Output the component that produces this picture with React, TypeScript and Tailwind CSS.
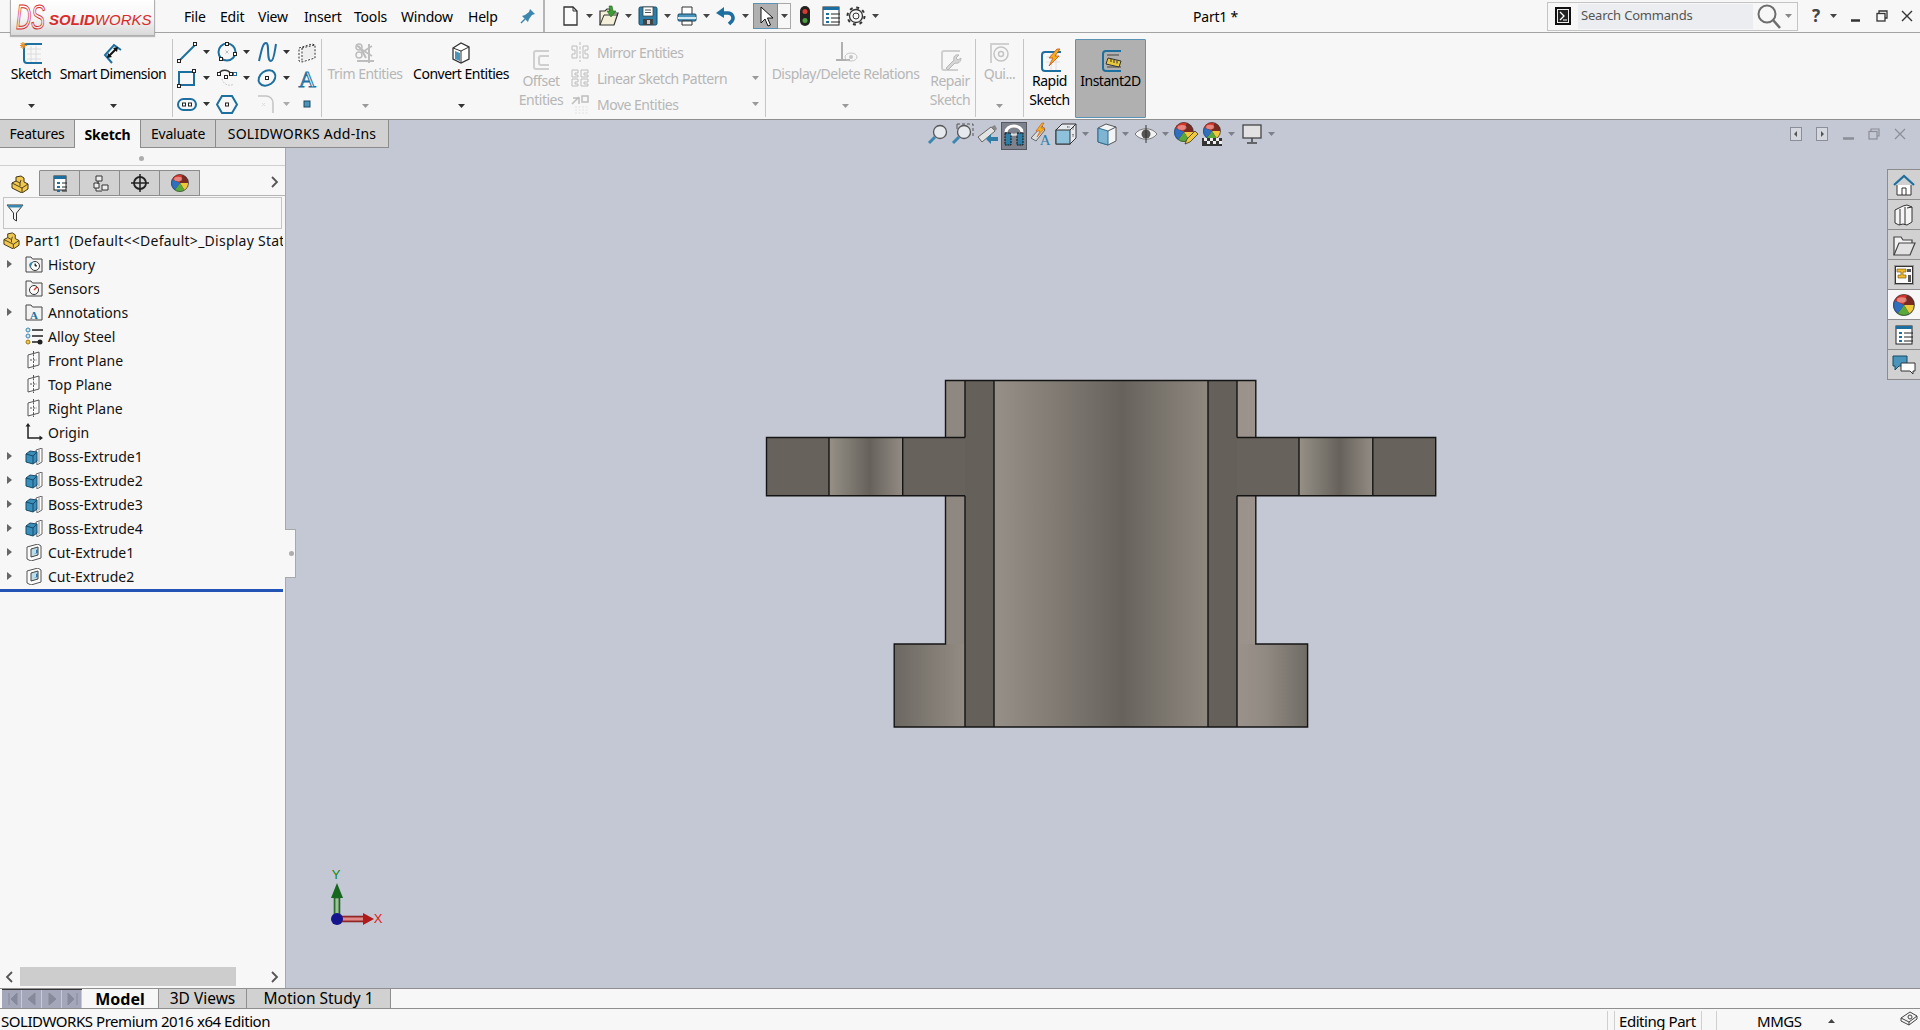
import React from "react";

const B = "#1d6f9f";
const G = "#bdbdbd";

type P = { w?: number; h?: number; children?: React.ReactNode };
const S = ({ w = 24, h = 24, children }: P) => (
  <svg width={w} height={h} viewBox={`0 0 ${w} ${h}`} className="shrink-0 block" fill="none">
    {children}
  </svg>
);
const Sq = ({ x, y, c = "#222" }: { x: number; y: number; c?: string }) => (
  <rect x={x - 1.5} y={y - 1.5} width="3" height="3" fill="#fff" stroke={c} strokeWidth="1" />
);
const Caret = ({ c = "#444" }: { c?: string }) => (
  <svg width="7" height="4" viewBox="0 0 7 4" className="shrink-0 block">
    <path d="M0 0h7L3.5 4z" fill={c} />
  </svg>
);

/* Ribbon icons */
const SketchI = () => (
  <S>
    <path d="M8 8h14M8 13h14M8 18h14M12 5v17M17 5v17" stroke="#dcdcdc" />
    <path d="M23 3H8a3 3 0 0 0-3 3v13a3 3 0 0 0 3 3h15" stroke={B} strokeWidth="2" />
    <path d="M4 1v7M1 4.500h7M1.800 2.200l4.400 4.400M6.200 2.200l-4.400 4.400" stroke="#e8902a" strokeWidth="1.200" />
  </S>
);
const SmartDimI = () => (
  <S>
    <path d="M20 9l-7-5-9 10 7 8" stroke={B} strokeWidth="2" />
    <path d="M8 15l7-7" stroke="#111" strokeWidth="2" />
    <path d="M6 17l1-5 4 4zM17 6l-1 5-4-4z" fill="#111" />
  </S>
);
const LineI = () => (
  <S w={22} h={24}>
    <path d="M4 20L19 5" stroke={B} strokeWidth="2" />
    <Sq x={3} y={21} />
    <Sq x={19} y={4} />
  </S>
);
const CircleI = () => (
  <S w={22} h={24}>
    <circle cx="11" cy="12" r="8.500" stroke={B} strokeWidth="2" />
    <path d="M9.500 10.500l3 3m0-3l-3 3" stroke="#bbb" />
    <Sq x={11} y={4} />
    <Sq x={19} y={14} />
    <Sq x={5} y={19} />
  </S>
);
const SplineI = () => (
  <S w={22} h={24}>
    <path d="M3 21C6 8 7 3 10 3c4 0 0 18 5 18 3 0 4-12 5-17" stroke={B} strokeWidth="2" />
  </S>
);
const ConstrI = () => (
  <S w={22} h={24}>
    <path d="M3 8l13-4 3 1v13l-13 4-3-1z" stroke="#333" strokeDasharray="2 1.500" />
    <path d="M6 8v14M6 8l13-3" stroke="#333" strokeDasharray="2 1.500" />
    <path d="M7 9l11-3v11L7 20z" fill="#eeeeee" />
  </S>
);
const RectI = () => (
  <S w={22} h={24}>
    <rect x="3" y="6" width="15" height="13" stroke={B} strokeWidth="2" />
    <Sq x={3} y={20} />
    <Sq x={18} y={5} />
  </S>
);
const PerimI = () => (
  <S w={22} h={24}>
    <path d="M6 13a8 8 0 0 0 12 5" stroke="#bbb" strokeDasharray="1.500 1.500" />
    <path d="M3 8c2-5 9-5 12 0" stroke="#333" strokeWidth="1.500" />
    <Sq x={3} y={8} />
    <Sq x={10} y={11} />
    <Sq x={15} y={8} />
    <Sq x={19} y={8} c={B} />
  </S>
);
const EllipseI = () => (
  <S w={22} h={24}>
    <ellipse cx="11" cy="12" rx="9" ry="7" transform="rotate(-35 11 12)" stroke={B} strokeWidth="2" />
    <Sq x={11} y={12} />
  </S>
);
const TextI = () => (
  <S w={22} h={24}>
    <text x="11" y="21" textAnchor="middle" fontFamily="Liberation Serif, serif" fontSize="24" fill="#dff0f8" stroke={B} strokeWidth="1">
      A
    </text>
  </S>
);
const SlotI = () => (
  <S w={22} h={24}>
    <rect x="2" y="7" width="18" height="11" rx="5.500" stroke={B} strokeWidth="2" />
    <Sq x={8} y={12.500} />
    <Sq x={14} y={12.500} />
  </S>
);
const PolyI = () => (
  <S w={22} h={24}>
    <path d="M6 4h10l5 8.500-5 8.500H6L1 12.500z" stroke={B} strokeWidth="2" />
    <Sq x={11} y={12.500} />
  </S>
);
const FilletI = () => (
  <S w={22} h={24}>
    <path d="M2 4h8a7 7 0 0 1 7 7v10" stroke="#c4c4c4" strokeWidth="1.500" />
    <path d="M6 11l3 3m0-3l-3 3" stroke="#ddd" />
  </S>
);
const PointI = () => (
  <S w={22} h={24}>
    <rect x="8" y="9" width="6" height="6" fill="#4a93bb" stroke="#1d4a66" />
  </S>
);
const TrimI = () => (
  <S>
    <path d="M4 20h17M16 3v19M4 5c3 0 5 4 9 12" stroke={G} strokeWidth="2" />
    <circle cx="6" cy="6" r="3" stroke={G} strokeWidth="1.500" />
    <circle cx="6" cy="14" r="3" stroke={G} strokeWidth="1.500" />
    <path d="M8 8l11 7M8 12l11-7" stroke={G} strokeWidth="1.500" />
  </S>
);
const ConvertI = () => (
  <S>
    <path d="M4 7l8-5 8 4v12l-8 4-8-4z" fill="#fff" stroke="#333" strokeWidth="1.300" />
    <path d="M4 7l8 3 8-4M12 10v12" stroke="#333" />
    <path d="M6 10l5 2v8l-5-2z" fill="#4a93bb" />
  </S>
);
const OffsetI = () => (
  <S>
    <path d="M20 3H7a2 2 0 0 0-2 2v14a2 2 0 0 0 2 2h13" stroke="#cfcfcf" strokeWidth="2" />
    <path d="M20 8h-8a2 2 0 0 0-2 2v5a2 2 0 0 0 2 2h8" stroke="#cfcfcf" strokeWidth="2" />
  </S>
);
const MirrorI = () => (
  <S w={20} h={20}>
    <path d="M10 0v20" stroke={G} strokeDasharray="3 1.500" />
    <path d="M7 4H2v4h3v4H2v4h5zM13 4h5v4h-3v4h3v4h-5z" stroke={G} />
  </S>
);
const LinearI = () => (
  <S w={20} h={20}>
    <path d="M2 2h6v3H5v2h3v2H2zM11 2h7v3h-4v2h4v2h-7zM2 11h6v3H5v2h3v2H2zM11 11h7v3h-4v2h4v2h-7z" stroke={G} />
  </S>
);
const MoveI = () => (
  <S w={20} h={20}>
    <path d="M2 10l7-7M3 4h6v6" stroke={G} strokeWidth="1.500" />
    <rect x="12" y="2" width="6" height="6" stroke={G} strokeWidth="1.500" />
    <path d="M5 13h13M5 16h13M5 19h13" stroke="#e2e2e2" strokeDasharray="2 1.500" />
  </S>
);
const RelI = () => (
  <S>
    <path d="M8 1v17M2 19h14" stroke="#b0b0b0" strokeWidth="2" />
    <ellipse cx="17" cy="16" rx="6" ry="4" stroke="#c4c4c4" />
    <circle cx="17" cy="16" r="2" fill="#c4c4c4" />
  </S>
);
const RepairI = () => (
  <S>
    <path d="M22 3H6a2 2 0 0 0-2 2v15a2 2 0 0 0 2 2h14" stroke="#cfcfcf" strokeWidth="2" />
    <path d="M8 20l8-8c-1-3 1-6 5-5l-3 3 2 2 3-2c0 4-3 6-6 5l-7 7z" fill="#d5d5d5" stroke="#b8b8b8" />
  </S>
);
const QuickI = () => (
  <S>
    <path d="M3 22V3h18" stroke="#d0d0d0" strokeWidth="2" />
    <circle cx="13" cy="13" r="7" stroke="#c4c4c4" strokeWidth="1.500" />
    <circle cx="13" cy="13" r="2.500" stroke="#c4c4c4" strokeWidth="1.500" />
  </S>
);
const RapidI = () => (
  <S>
    <path d="M8 9h14M8 14h14M13 6v17M18 6v17" stroke="#dedede" />
    <path d="M23 4H7a3 3 0 0 0-3 3v13a3 3 0 0 0 3 3h16" stroke={B} strokeWidth="2" />
    <path d="M19 1l-8 9h4l-4 8 10-10h-4l5-7z" fill="#f2b01e" stroke="#c8541a" strokeWidth="0.800" />
  </S>
);
const InstantI = () => (
  <S>
    <path d="M22 3H7a3 3 0 0 0-3 3v14a3 3 0 0 0 3 3h15" stroke={B} strokeWidth="2" />
    <path d="M8 7h12M8 19h14" stroke="#444" />
    <path d="M9 10l13 3-2 6L7 16z" fill="#e8c840" stroke="#333" />
    <path d="M12 11v3M15 12v3M18 12.500v3" stroke="#333" />
  </S>
);

/* Quick access */
const NewI = () => (
  <S>
    <path d="M6 3h9l4 4v14H6z" fill="#fbfbfb" stroke="#333" strokeWidth="1.300" />
    <path d="M15 3v4h4" stroke="#333" />
  </S>
);
const OpenI = () => (
  <S>
    <path d="M3 21V7h5l2-2h3v4h8l-4 12z" fill="#f4efd8" stroke="#333" strokeWidth="1.200" />
    <path d="M3 21l4-10h14" stroke="#333" />
    <path d="M12 2h3l1 5 3 0-5 6-4-6 3 0z" fill="#3f9c35" stroke="#1d6a1c" strokeWidth="0.600" />
  </S>
);
const SaveI = () => (
  <S>
    <rect x="3" y="3" width="18" height="18" rx="1.500" fill="#2f7ea8" stroke="#174a66" />
    <rect x="7" y="3" width="10" height="9" fill="#fff" stroke="#333" strokeWidth="0.700" />
    <path d="M9 6h6M9 8.500h6" stroke="#555" />
    <rect x="7" y="15" width="10" height="6" fill="#444" />
    <rect x="11" y="16" width="3" height="4" fill="#ccc" />
  </S>
);
const PrintI = () => (
  <S>
    <path d="M7 10V3h10v7" fill="#fff" stroke="#333" />
    <rect x="3" y="10" width="18" height="7" rx="1" fill="#4a93bb" stroke="#174a66" />
    <rect x="3" y="13" width="18" height="2" fill="#d8e8f0" />
    <path d="M7 17h10v4H7z" fill="#fff" stroke="#333" />
  </S>
);
const UndoI = () => (
  <S>
    <path d="M7 9h7a5 5 0 0 1 4 8l-3 3" stroke="#1d6f9f" strokeWidth="3.500" fill="none" />
    <path d="M10 3L2 9l8 5z" fill="#1d6f9f" />
  </S>
);
const CursorI = () => (
  <S w={16} h={22}>
    <path d="M3 2v16l4-4 3 7 2.500-1-3-7h5.500z" fill="#fff" stroke="#111" />
  </S>
);
const TrafficI = () => (
  <S>
    <rect x="7" y="2" width="10" height="20" rx="5" fill="#222" />
    <circle cx="12" cy="7.500" r="2.500" fill="#d83a2e" />
    <circle cx="12" cy="16.500" r="2.500" fill="#4aa03a" />
  </S>
);
const ListI = ({ s = 24 }: { s?: number }) => (
  <S w={s} h={s}>
    <rect x="4" y="3" width={s - 8} height={s - 6} fill="#fff" stroke="#222" />
    <rect x="4" y="3" width={s - 8} height="3" fill={B} />
    <path d={`M7 9h3v2H7zM7 13h3v2H7zM7 17h3v2H7z`} fill={B} />
    <path d={`M12 10h${s - 15}M12 14h${s - 15}M12 18h${s - 15}`} stroke="#222" />
  </S>
);
const GearI = () => (
  <S>
    <circle cx="12" cy="12" r="6.500" stroke="#333" strokeWidth="1.300" />
    <circle cx="12" cy="12" r="3" stroke="#333" />
    <circle cx="12" cy="12" r="8.500" stroke="#333" strokeWidth="2" strokeDasharray="3 3.670" />
  </S>
);
const PinI = () => (
  <S w={18} h={18}>
    <path d="M11 2l5 5-3 1-3 4-1 3-6-6 3-1 4-3z" fill="#3b87ae" />
    <path d="M6 12l-4 4" stroke="#3b87ae" strokeWidth="1.500" />
  </S>
);

/* Balls etc */
const Ball = ({ s = 20 }: { s?: number }) => (
  <svg width={s} height={s} viewBox="0 0 20 20" className="shrink-0 block">
    <circle cx="10" cy="10" r="9.500" fill="#333" />
    <path d="M10 10L1 6A9.500 9.500 0 0 1 13 1z" fill="#d8342a" />
    <path d="M10 10l3-9a9.500 9.500 0 0 1 6 9z" fill="#7a2a20" />
    <path d="M10 10h9a9.500 9.500 0 0 1-4 8z" fill="#f0c83a" />
    <path d="M10 10l5 8a9.500 9.500 0 0 1-11 0z" fill="#5aa83a" />
    <path d="M10 10l-6 8A9.500 9.500 0 0 1 1 6z" fill="#2f6fc0" />
    <ellipse cx="8" cy="5.500" rx="4.500" ry="2.500" fill="#fff" opacity="0.400" />
    <circle cx="10" cy="10" r="9.500" fill="none" stroke="#3a3a3a" strokeOpacity="0.600" />
  </svg>
);
const PartI = ({ s = 17 }: { s?: number }) => (
  <svg width={s} height={s} viewBox="0 0 18 18" className="shrink-0 block">
    <path d="M1 8l4-2 0-4 5-1 3 2v4l4 2v5l-6 4-10-5z" fill="#f0c850" stroke="#3d3218" strokeWidth="1" />
    <path d="M1 8l10 5v4M11 13l6-4M5 6l4 2v3M10 5l-1 3" stroke="#3d3218" strokeWidth="0.900" fill="none" />
  </svg>
);

/* Tree */
const Folder = ({ children }: { children?: React.ReactNode }) => (
  <svg width="18" height="18" viewBox="0 0 18 18" className="block">
    <path d="M1 17V2h5l1.500 2H17v13z" fill="#f3f3f3" stroke="#444" strokeWidth="1" />
    {children}
  </svg>
);
const HistoryI = () => (
  <Folder>
    <circle cx="10" cy="11" r="4.500" fill="#fff" stroke="#333" />
    <path d="M10 8.500V11h2" stroke="#333" />
    <path d="M4 10a4 4 0 0 1 4-3L5 13z" fill="#3b87ae" />
  </Folder>
);
const SensorI = () => (
  <Folder>
    <circle cx="9" cy="11" r="4.500" fill="#fff" stroke="#333" />
    <path d="M9 11l3-3" stroke="#d8342a" strokeWidth="1.500" />
  </Folder>
);
const AnnotI = () => (
  <Folder>
    <text x="9" y="15.500" textAnchor="middle" fontFamily="Liberation Serif, serif" fontWeight="700" fontSize="11" fill="#1d6f9f">
      A
    </text>
  </Folder>
);
const MaterialI = () => (
  <svg width="19" height="18" viewBox="0 0 19 18" className="block">
    <circle cx="3" cy="3" r="2" fill="#cfe3ee" stroke="#3b87ae" />
    <circle cx="3" cy="9" r="2" fill="#cfe3ee" stroke="#3b87ae" />
    <circle cx="3" cy="15" r="2" fill="#f0c850" stroke="#a07a10" />
    <path d="M7 3h11M7 9h11M7 15h6" stroke="#222" strokeWidth="1.700" />
    <circle cx="15" cy="15" r="2.500" fill="#222" />
  </svg>
);
const PlaneI = () => (
  <svg width="14" height="18" viewBox="0 0 14 18" className="block">
    <path d="M1 4l11-3v13L1 17z" fill="#fafafa" stroke="#555" />
    <path d="M6.500 0v18M3 9h7" stroke="#555" strokeDasharray="2 1.300" />
  </svg>
);
const OriginI = () => (
  <svg width="18" height="18" viewBox="0 0 18 18" className="block">
    <path d="M3 2v13h13" stroke="#222" strokeWidth="1.500" fill="none" />
    <path d="M3 0l2.500 3.500h-5zM18 15l-3.500 2.500v-5z" fill="#222" />
  </svg>
);
const BossI = () => (
  <svg width="19" height="17" viewBox="0 0 19 17" className="block">
    <path d="M11 2l6-2v14l-5 3z" fill="#fff" stroke="#666" />
    <path d="M14 1.500v13" stroke="#888" />
    <path d="M1 6l4-3 7 1v9l-4 3-7-2z" fill="#3a8ebc" stroke="#174a66" />
    <path d="M1 6l7 2 4-4M8 8v8" stroke="#174a66" fill="none" />
  </svg>
);
const CutI = () => (
  <svg width="16" height="17" viewBox="0 0 16 17" className="block">
    <path d="M1 3l11-3 3 2v12l-10 3-4-2z" fill="#fbfbfb" stroke="#555" />
    <path d="M5 5l7-2v8l-7 2z" fill="#bfdcea" stroke="#444" />
    <path d="M8 10l4-1V5l-2 1v3z" fill="#2f7ea8" />
  </svg>
);

/* Heads-up */
const Mag = ({ children }: { children?: React.ReactNode }) => (
  <S>
    {children}
    <circle cx="14" cy="10" r="6.500" fill="#e6e9ee" stroke="#555" strokeWidth="1.300" />
    <path d="M9 15l-6 6" stroke="#3b87ae" strokeWidth="3" />
  </S>
);
const ZoomFitI = () => (
  <Mag>
    <path d="M14 7l-2 2h4zM14 13l-2-2h4zM11 10l2-2v4zM17 10l-2-2v4z" fill="#666" />
  </Mag>
);
const ZoomAreaI = () => (
  <Mag>
    <path d="M7 2h16v14" stroke="#555" strokeDasharray="3 2" />
    <path d="M7 2v5" stroke="#555" />
  </Mag>
);
const PrevI = () => (
  <S>
    <path d="M3 15L16 5l4 4-13 11z" fill="#e3e3e3" stroke="#666" />
    <path d="M16 5l4-2 2 4-2 2z" fill="#888" />
    <path d="M11 17l5-5v3h7v4h-7v3z" fill="#2f7ea8" />
  </S>
);
const SectionI = () => (
  <S>
    <path d="M4 8a8 6 0 0 1 16 0" stroke="#fff" strokeWidth="3" />
    <rect x="3" y="9" width="6" height="12" fill="#2f7ea8" stroke="#111" strokeDasharray="2 0.800" />
    <rect x="15" y="9" width="6" height="12" fill="#2f7ea8" stroke="#111" strokeDasharray="2 0.800" />
    <path d="M9 10c2 1 4 1 6 0" stroke="#ddd" strokeWidth="2" />
  </S>
);
const DynAnnI = () => (
  <S>
    <path d="M3 16L14 4l3 4-9 11z" fill="#ddd" stroke="#666" />
    <path d="M14 1l-6 8h4l-3 6 8-9h-4l3-5z" fill="#f2b01e" stroke="#c8541a" strokeWidth="0.600" />
    <text x="17" y="23" textAnchor="middle" fontFamily="Liberation Serif, serif" fontSize="15" fill="#2f7ea8">
      A
    </text>
  </S>
);
const ViewOrI = () => (
  <S>
    <path d="M2 8l6-6h14v14l-6 6H2z" fill="#e6e9ee" stroke="#333" />
    <rect x="2" y="8" width="14" height="14" fill="#8ec1dc" stroke="#333" />
    <path d="M16 8l6-6" stroke="#333" />
    <path d="M19 5v3M19 12v3M13 5h3" stroke="#333" strokeDasharray="1.500 1" />
  </S>
);
const DispI = () => (
  <S>
    <path d="M3 6l8-4 10 3v14l-8 4-10-3z" fill="#f2f4f6" stroke="#555" />
    <path d="M3 6l10 3v14l-10-3z" fill="#7fb5d2" stroke="#2f6f93" />
    <path d="M13 9l8-4" stroke="#555" />
  </S>
);
const HideI = () => (
  <S>
    <path d="M1 12c5-7 17-7 22 0-5 7-17 7-22 0z" fill="#f2f2f2" stroke="#777" />
    <circle cx="12" cy="12" r="4.500" fill="#555" />
    <path d="M12 3v18" stroke="#333" />
  </S>
);
const ApplyI = () => (
  <S>
    <Ball s={20} />
    <path d="M11 22l2-5 8-8 3 3-8 8z" fill="#f0c83a" stroke="#333" strokeWidth="0.800" />
  </S>
);
const SceneI = () => (
  <S>
    <g transform="translate(3 0)">
      <Ball s={18} />
    </g>
    <path d="M2 16h20v8H2z" fill="#333" />
    <path d="M4 16h3v3H4zM10 16h3v3h-3zM16 16h3v3h-3zM7 19h3v3H7zM13 19h3v3h-3zM19 19h3v3h-3z" fill="#eee" />
  </S>
);
const MonitorI = () => (
  <S>
    <rect x="3" y="3" width="18" height="13" fill="#e2e2e2" stroke="#444" strokeWidth="1.300" />
    <path d="M12 16v4M7 21h10" stroke="#444" strokeWidth="1.500" />
  </S>
);

/* Task pane */
const HomeI = () => (
  <S>
    <path d="M2 12L12 3l10 9" stroke={B} strokeWidth="2.200" />
    <path d="M5 12v10h14V12" fill="#fff" stroke="#333" />
    <path d="M10 22v-7h4v7" stroke="#333" />
  </S>
);
const BooksI = () => (
  <S>
    <path d="M3 7l4-2 4-2 4-1 5 2v15l-5 3-4-1-4 1-4-2z" fill="#f5f5f5" stroke="#333" />
    <path d="M8 6v16M13 4v18M15 5l5-1" stroke="#333" />
  </S>
);
const FolderI = () => (
  <S>
    <path d="M2 22V4h7l2 3h9v3" stroke="#444" strokeWidth="1.200" fill="#f2f2f2" />
    <path d="M2 22l5-12h16l-5 12z" fill="#e2e2e2" stroke="#444" strokeWidth="1.200" />
  </S>
);
const PaletteI = () => (
  <S>
    <rect x="2" y="2" width="20" height="20" fill="#999" />
    <rect x="3.500" y="3.500" width="17" height="17" fill="#fafafa" stroke="#333" />
    <path d="M5 6h9v3h-3v3h3v3H6v-3h3V9H5z" fill="#eeb92c" stroke="#6b5010" strokeWidth="0.600" />
    <path d="M15 6h4v3h-4zM16 12h3v7h-3z" fill="#555" />
  </S>
);
const ChatI = () => (
  <S>
    <path d="M1 3h14v10H7l-4 4v-4H1z" fill="#4a93bb" stroke="#174a66" />
    <path d="M9 10h14v8h-2v3l-3-3H9z" fill="#fff" stroke="#333" />
  </S>
);

/* Layout pieces */
const Big = ({
  icon,
  label,
  w,
  off,
  caret,
}: {
  icon: React.ReactNode;
  label: string;
  w: string;
  off?: boolean;
  caret?: boolean;
}) => (
  <div className={`${w} shrink-0 flex flex-col items-center pt-[8px] ${off ? "text-[#b6b6b6]" : "text-black"}`}>
    <div className="h-[23px] flex items-center">{icon}</div>
    <div className="h-[19px] leading-[19px] whitespace-nowrap">{label}</div>
    {caret && (
      <div className="mt-[21px]">
        <Caret c={off ? "#999" : "#333"} />
      </div>
    )}
  </div>
);
const Tall = ({
  icon,
  lines,
  w,
  off,
}: {
  icon: React.ReactNode;
  lines: string[];
  w: string;
  off?: boolean;
}) => (
  <div className={`${w} shrink-0 flex flex-col items-center pt-[15px] ${off ? "text-[#b6b6b6]" : "text-black"}`}>
    <div className="h-[23px] flex items-center">{icon}</div>
    {lines.map((l) => (
      <div key={l} className="h-[19px] leading-[19px] whitespace-nowrap">
        {l}
      </div>
    ))}
  </div>
);
const VDiv = () => <div className="w-[1px] h-[78px] mt-[6px] bg-[#c6c6c6] shrink-0" />;
const GridCell = ({ icon, c }: { icon: React.ReactNode; c?: string }) => (
  <div className="flex items-center pl-[3px] h-[26px]">
    {icon}
    {c && (
      <div className="ml-[5px]">
        <Caret c={c} />
      </div>
    )}
  </div>
);
const Small = ({ icon, label, caret }: { icon: React.ReactNode; label: string; caret?: boolean }) => (
  <div className="h-[26px] flex items-center text-[#b6b6b6] whitespace-nowrap">
    <div className="w-[20px] ml-[2px] mr-[7px]">{icon}</div>
    <div className="flex-1">{label}</div>
    {caret && (
      <div className="mr-[6px]">
        <Caret c="#999" />
      </div>
    )}
  </div>
);
const MenuItem = ({ w, label }: { w: string; label: string }) => <div className={`${w} shrink-0 pt-[1px]`}>{label}</div>;
const QA = ({ icon }: { icon: React.ReactNode }) => (
  <div className="flex items-center shrink-0">
    {icon}
    <div className="w-[15px] flex justify-center">
      <Caret />
    </div>
  </div>
);
const HC = ({ w = "w-[14px]" }: { w?: string }) => (
  <div className={`${w} shrink-0 h-[28px] flex items-center justify-center`}>
    <Caret c="#7d808a" />
  </div>
);
const Tab = ({ w, label, active, extra = "" }: { w: string; label: string; active?: boolean; extra?: string }) => (
  <div
    className={`${w} ${extra} h-[28px] shrink-0 flex items-center justify-center border-r border-[#8c8c8c] ${
      active ? "bg-[#f7f7f7] font-bold" : "bg-[#d1d1d1] border-b"
    }`}
  >
    {label}
  </div>
);
const FmTab = ({ children, active }: { children: React.ReactNode; active?: boolean }) => (
  <div
    className={`w-[40px] h-[26px] shrink-0 flex items-center justify-center border-r border-t border-[#8c8c8c] ${
      active ? "border-t-[#f7f7f7]" : "bg-[#d1d1d1] border-b"
    }`}
  >
    {children}
  </div>
);
const Row = ({ icon, label, arrow }: { icon: React.ReactNode; label: string; arrow?: boolean }) => (
  <div className="h-[24px] flex items-center whitespace-nowrap text-[#111] tracking-normal">
    <div className="w-[24px] flex justify-center pr-[5px]">
      {arrow && (
        <svg width="5" height="8" viewBox="0 0 5 8" className="block">
          <path d="M0 0l5 4-5 4z" fill="#666" />
        </svg>
      )}
    </div>
    <div className="w-[24px] flex justify-center pr-[4px]">{icon}</div>
    <span>{label}</span>
  </div>
);
const Pane = ({ children, active }: { children: React.ReactNode; active?: boolean }) => (
  <div
    className={`h-[30px] flex items-center justify-center border-b border-[#8c8c8c] ${
      active ? "bg-[#f7f7f7]" : "bg-[#d1d1d1]"
    }`}
  >
    {children}
  </div>
);
const Chev = ({ d }: { d: string }) => (
  <svg width="10" height="12" viewBox="0 0 10 12" className="block">
    <path d={d} stroke="#555" strokeWidth="1.800" fill="none" />
  </svg>
);

const PartDrawing = () => (
  <svg width="682" height="358" viewBox="760 375 682 358" className="block">
    <defs>
      <linearGradient id="barrel" x1="0" x2="1" y1="0" y2="0">
        <stop offset="0" stopColor="#979088" />
        <stop offset="0.6" stopColor="#67635c" />
        <stop offset="1" stopColor="#8f8880" />
      </linearGradient>
      <linearGradient id="hole" x1="0" x2="1" y1="0" y2="0">
        <stop offset="0" stopColor="#969087" />
        <stop offset="0.55" stopColor="#66625b" />
        <stop offset="1" stopColor="#938c84" />
      </linearGradient>
      <linearGradient id="baseL" x1="0" x2="1" y1="0" y2="0">
        <stop offset="0" stopColor="#6c6861" />
        <stop offset="1" stopColor="#938c84" />
      </linearGradient>
      <linearGradient id="baseR" x1="0" x2="1" y1="0" y2="0">
        <stop offset="0" stopColor="#9b938b" />
        <stop offset="0.4" stopColor="#918a82" />
        <stop offset="1" stopColor="#6f6b65" />
      </linearGradient>
    </defs>
    <rect x="945.500" y="380.500" width="19.500" height="264" fill="#8f8880" />
    <rect x="1237" y="380.500" width="18.800" height="264" fill="#9b938b" />
    <rect x="894.200" y="644" width="70.800" height="83" fill="url(#baseL)" />
    <rect x="1237" y="644" width="70.600" height="83" fill="url(#baseR)" />
    <rect x="965" y="380.500" width="29" height="346.500" fill="#65605a" />
    <rect x="1208" y="380.500" width="29" height="346.500" fill="#65605a" />
    <rect x="994" y="380.500" width="214" height="346.500" fill="url(#barrel)" />
    <rect x="766.500" y="437.500" width="198.500" height="58" fill="#67625b" />
    <rect x="1237" y="437.500" width="198.700" height="58" fill="#67625b" />
    <rect x="829" y="437.500" width="74" height="58" fill="url(#hole)" />
    <rect x="1299" y="437.500" width="74" height="58" fill="url(#hole)" />
    <path
      d="M945.500 437.500V380.500H1255.800V437.500H1435.700V495.700H1255.800V644H1307.600V727H894.200V644H945.500V495.700H766.500V437.500H965M965 380.500V437.500M965 495.700H945.500M965 495.700V727M994 380.500V727M1208 380.500V727M1237 380.500V437.500M1237 495.700V727M1237 437.500H1255.800M1237 495.700H1255.800M829 437.500V495.700M902.700 437.500V495.700M1299 437.500V495.700M1372.800 437.500V495.700"
      stroke="#141414"
      strokeWidth="1.400"
      fill="none"
    />
  </svg>
);

const Triad = () => (
  <svg width="70" height="70" viewBox="0 0 70 70" className="block">
    <defs>
      <linearGradient id="gy" x1="0" x2="1" y1="0" y2="0">
        <stop offset="0" stopColor="#1c6b22" />
        <stop offset="0.5" stopColor="#b8d8b0" />
        <stop offset="1" stopColor="#14581a" />
      </linearGradient>
      <linearGradient id="rx" x1="0" x2="0" y1="0" y2="1">
        <stop offset="0" stopColor="#8a1515" />
        <stop offset="0.5" stopColor="#f0a0a0" />
        <stop offset="1" stopColor="#8a1515" />
      </linearGradient>
    </defs>
    <rect x="14" y="33" width="6" height="20" fill="url(#gy)" stroke="#0e4a14" strokeWidth="0.500" />
    <path d="M17 18l6 15H11z" fill="#17661e" />
    <rect x="17" y="51" width="30" height="6" fill="url(#rx)" stroke="#7a1010" strokeWidth="0.500" />
    <path d="M54 54l-11-6v12z" fill="#b01a1a" />
    <circle cx="17" cy="54" r="6" fill="#14148c" />
    <text x="16" y="14" textAnchor="middle" fontFamily="Liberation Sans, sans-serif" fontSize="13" fill="#128a1a">
      Y
    </text>
    <text x="58" y="58" textAnchor="middle" fontFamily="Liberation Sans, sans-serif" fontSize="13" fill="#e01818">
      X
    </text>
  </svg>
);

export default function App() {
  return (
    <div className="w-[1920px] h-[1030px] overflow-hidden flex flex-col bg-[#f7f7f7] text-[14px] text-black font-['Noto_Sans',sans-serif] tracking-[-0.2px]">
      {/* Title bar */}
      <div className="relative h-[33px] shrink-0 flex items-center border-b border-[#a3a3a3]">
        <div className="absolute left-[10px] top-0 w-[145px] h-[36px] z-10 border border-t-0 border-[#b0b0b0] bg-gradient-to-b from-[#ffffff] via-[#f6f6f6] to-[#d9d9d9] shadow-[0_1px_1px_rgba(0,0,0,0.25)] flex items-center overflow-hidden">
          <svg width="34" height="34" viewBox="0 0 34 34" className="block shrink-0 ml-[4px]">
            <text
              x="1"
              y="28"
              fontFamily="Liberation Sans, sans-serif"
              fontStyle="italic"
              fontSize="35"
              fill="none"
              stroke="#d92b2b"
              strokeWidth="1"
              textLength="29"
              lengthAdjust="spacingAndGlyphs"
            >
              DS
            </text>
          </svg>
          <div className="mt-[5px] text-[#d92b2b] italic text-[15px] font-['Liberation_Sans',sans-serif] whitespace-nowrap tracking-normal">
            <span className="font-bold">SOLID</span>
            <span>WORKS</span>
          </div>
        </div>
        <div className="w-[184px] shrink-0" />
        <MenuItem w="w-[36px]" label="File" />
        <MenuItem w="w-[38px]" label="Edit" />
        <MenuItem w="w-[46px]" label="View" />
        <MenuItem w="w-[50px]" label="Insert" />
        <MenuItem w="w-[47px]" label="Tools" />
        <MenuItem w="w-[67px]" label="Window" />
        <MenuItem w="w-[50px]" label="Help" />
        <div className="w-[20px] flex justify-center shrink-0">
          <PinI />
        </div>
        <div className="w-[2px] h-[32px] ml-[5px] bg-[#b5b5b5] shrink-0" />
        <div className="ml-[13px] flex items-center shrink-0">
          <QA icon={<NewI />} />
          <QA icon={<OpenI />} />
          <QA icon={<SaveI />} />
          <QA icon={<PrintI />} />
          <QA icon={<UndoI />} />
          <div className="w-[25px] h-[26px] bg-[#b0b0b0] border border-[#5b93b5] flex items-center justify-center">
            <CursorI />
          </div>
          <div className="w-[13px] h-[26px] border border-l-0 border-[#a8a8a8] flex items-center justify-center">
            <Caret />
          </div>
          <div className="ml-[2px]">
            <TrafficI />
          </div>
          <div className="ml-[2px]">
            <ListI />
          </div>
          <div className="ml-[1px]">
            <QA icon={<GearI />} />
          </div>
        </div>
        <div className="ml-[310px] shrink-0 whitespace-nowrap pt-[1px]">Part1 *</div>
        <div className="ml-auto flex items-center shrink-0">
          <div className="w-[251px] h-[29px] border border-[#c4c4c4] flex items-center">
            <div className="w-[30px] flex justify-center">
              <svg width="16" height="18" viewBox="0 0 16 18" className="block">
                <rect width="16" height="18" fill="#111" />
                <rect x="2" y="2" width="12" height="14" fill="#eee" />
                <rect x="3" y="3" width="10" height="12" fill="#222" />
                <path d="M5 5l4 4-4 4" stroke="#fff" strokeWidth="1.300" fill="none" />
                <path d="M8 13h4" stroke="#fff" />
              </svg>
            </div>
            <div className="w-[175px] h-[25px] bg-[#ebedf0] flex items-center pl-[3px] text-[13px] text-[#555] whitespace-nowrap">
              Search Commands
            </div>
            <div className="w-[32px] flex justify-center">
              <svg width="26" height="26" viewBox="0 0 26 26" className="block">
                <circle cx="11" cy="11" r="8.500" stroke="#6d6d6d" strokeWidth="2" fill="none" />
                <path d="M17 17l7 8" stroke="#6d6d6d" strokeWidth="2.500" />
              </svg>
            </div>
            <Caret c="#888" />
          </div>
          <div className="w-[32px] text-center font-bold text-[17px] text-[#444] pl-[4px]">?</div>
          <Caret />
          <div className="w-[36px] flex justify-center">
            <svg width="11" height="11" viewBox="0 0 11 11" className="block">
              <path d="M1 9.500h9" stroke="#333" strokeWidth="2.500" />
            </svg>
          </div>
          <div className="w-[18px] flex justify-center">
            <svg width="12" height="12" viewBox="0 0 12 12" className="block">
              <path d="M3 3V1h8v7H9" stroke="#333" strokeWidth="1.300" fill="none" />
              <rect x="1" y="3.500" width="8" height="7.500" stroke="#333" strokeWidth="1.300" fill="none" />
            </svg>
          </div>
          <div className="w-[29px] flex justify-center pl-[3px]">
            <svg width="12" height="12" viewBox="0 0 12 12" className="block">
              <path d="M1 1l10 10M11 1L1 11" stroke="#333" strokeWidth="1.400" />
            </svg>
          </div>
        </div>
      </div>

      {/* Ribbon */}
      <div className="h-[87px] shrink-0 flex items-start border-b border-[#8f8f8f] tracking-[-0.5px]">
        <Big w="w-[62px]" icon={<SketchI />} label="Sketch" caret />
        <Big w="w-[102px]" icon={<SmartDimI />} label="Smart Dimension" caret />
        <div className="w-[8px] shrink-0" />
        <VDiv />
        <div className="w-[148px] shrink-0 grid grid-cols-[40px_40px_40px_28px] pt-[6px]">
          <GridCell icon={<LineI />} c="#333" />
          <GridCell icon={<CircleI />} c="#333" />
          <GridCell icon={<SplineI />} c="#333" />
          <GridCell icon={<ConstrI />} />
          <GridCell icon={<RectI />} c="#333" />
          <GridCell icon={<PerimI />} c="#333" />
          <GridCell icon={<EllipseI />} c="#333" />
          <GridCell icon={<TextI />} />
          <GridCell icon={<SlotI />} c="#333" />
          <GridCell icon={<PolyI />} />
          <GridCell icon={<FilletI />} c="#aaa" />
          <GridCell icon={<PointI />} />
        </div>
        <VDiv />
        <Big w="w-[86px]" off icon={<TrimI />} label="Trim Entities" caret />
        <Big w="w-[106px]" icon={<ConvertI />} label="Convert Entities" caret />
        <Tall w="w-[54px]" off icon={<OffsetI />} lines={["Offset", "Entities"]} />
        <div className="w-[197px] shrink-0 pt-[6px]">
          <Small icon={<MirrorI />} label="Mirror Entities" />
          <Small icon={<LinearI />} label="Linear Sketch Pattern" caret />
          <Small icon={<MoveI />} label="Move Entities" caret />
        </div>
        <VDiv />
        <Big w="w-[159px]" off icon={<RelI />} label="Display/Delete Relations" caret />
        <Tall w="w-[50px]" off icon={<RepairI />} lines={["Repair", "Sketch"]} />
        <VDiv />
        <Big w="w-[47px]" off icon={<QuickI />} label="Qui..." caret />
        <VDiv />
        <Tall w="w-[51px]" icon={<RapidI />} lines={["Rapid", "Sketch"]} />
        <div className="w-[71px] h-[79px] mt-[6px] shrink-0 bg-[#b0b0b0] border border-[#5b93b5] rounded-[1px] flex flex-col items-center pt-[8px]">
          <div className="h-[23px] flex items-center">
            <InstantI />
          </div>
          <div className="h-[19px] leading-[19px] whitespace-nowrap">Instant2D</div>
        </div>
      </div>

      {/* Main */}
      <div className="flex-1 min-h-0 flex flex-col bg-[#c4c8d4]">
        <div className="h-[28px] shrink-0 flex items-start">
          <Tab w="w-[75px]" label="Features" />
          <Tab w="w-[66px]" label="Sketch" active />
          <Tab w="w-[75px]" label="Evaluate" />
          <Tab w="w-[173px]" label="SOLIDWORKS Add-Ins" extra="tracking-[0.25px]" />
          <div className="ml-[537px] flex items-center h-[28px] shrink-0">
            <ZoomFitI />
            <ZoomAreaI />
            <div className="ml-[1px]">
              <PrevI />
            </div>
            <div className="ml-[2px] w-[26px] h-[28px] mt-[3px] bg-[#7e828c] border border-[#55585f] flex items-center justify-center">
              <SectionI />
            </div>
            <div className="ml-[1px]">
              <DynAnnI />
            </div>
            <div className="ml-[2px]">
              <ViewOrI />
            </div>
            <HC />
            <div className="ml-[3px]">
              <DispI />
            </div>
            <HC w="w-[13px]" />
            <div className="ml-[2px]">
              <HideI />
            </div>
            <HC />
            <div className="ml-[2px]">
              <ApplyI />
            </div>
            <div className="ml-[2px]">
              <SceneI />
            </div>
            <HC />
            <div className="ml-[2px]">
              <MonitorI />
            </div>
            <HC />
          </div>
          <div className="ml-auto mr-[7px] h-[28px] flex items-center shrink-0">
            <div className="w-[26px] flex justify-center">
              <svg width="12" height="14" viewBox="0 0 12 14" className="block">
                <rect x="0.500" y="0.500" width="11" height="13" fill="#d5d8df" stroke="#8b8e96" />
                <path d="M7 4l-3 3 3 3z" fill="#555" />
              </svg>
            </div>
            <div className="w-[26px] flex justify-center">
              <svg width="12" height="14" viewBox="0 0 12 14" className="block">
                <rect x="0.500" y="0.500" width="11" height="13" fill="#d5d8df" stroke="#8b8e96" />
                <path d="M5 4l3 3-3 3z" fill="#555" />
              </svg>
            </div>
            <div className="w-[26px] flex justify-center">
              <svg width="11" height="11" viewBox="0 0 11 11" className="block">
                <path d="M0 9.500h11" stroke="#8b8e96" strokeWidth="2.500" />
              </svg>
            </div>
            <div className="w-[26px] flex justify-center">
              <svg width="12" height="12" viewBox="0 0 12 12" className="block">
                <path d="M3 3V1h8v7H9" stroke="#8b8e96" strokeWidth="1.200" fill="none" />
                <rect x="1" y="3.500" width="8" height="7.500" stroke="#8b8e96" strokeWidth="1.200" fill="none" />
              </svg>
            </div>
            <div className="w-[26px] flex justify-center">
              <svg width="12" height="12" viewBox="0 0 12 12" className="block">
                <path d="M1 1l10 10M11 1L1 11" stroke="#8b8e96" strokeWidth="1.200" />
              </svg>
            </div>
          </div>
        </div>

        <div className="flex-1 min-h-0 flex">
          {/* Left panel */}
          <div className="w-[286px] shrink-0 h-full bg-[#f7f7f7] border-r border-[#a8a8a8] flex flex-col">
            <div className="h-[17px] flex items-center justify-center pt-[3px] pr-[2px] shrink-0">
              <div className="w-[5px] h-[5px] rounded-full bg-[#adadad]" />
            </div>
            <div className="h-[1px] bg-[#cfcfcf] shrink-0" />
            <div className="mt-[4px] h-[26px] flex shrink-0 relative">
              <FmTab active>
                <PartI s={18} />
              </FmTab>
              <FmTab>
                <ListI s={20} />
              </FmTab>
              <FmTab>
                <svg width="18" height="18" viewBox="0 0 18 18" className="block">
                  <path d="M5 2h6v5H5zM3 9h5v5H3zM11 11h6v5h-6zM7 7v3M5 14v3h6" stroke="#333" fill="#eee" />
                </svg>
              </FmTab>
              <FmTab>
                <svg width="18" height="18" viewBox="0 0 18 18" className="block">
                  <circle cx="9" cy="9" r="6" stroke="#222" strokeWidth="1.800" fill="none" />
                  <path d="M9 0v18M0 9h18" stroke="#222" strokeWidth="1.500" />
                </svg>
              </FmTab>
              <FmTab>
                <Ball s={18} />
              </FmTab>
              <div className="flex-1 border-b border-[#b5b5b5] flex items-center justify-end pr-[6px] pb-[1px]">
                <Chev d="M3 1l5 5-5 5" />
              </div>
            </div>
            <div className="h-[32px] mx-[3px] w-[279px] border border-[#c4c4c4] flex items-center pl-[2px] shrink-0 mt-[1px]">
              <svg width="18" height="18" viewBox="0 0 18 18" className="block">
                <path d="M1 1h16L10.500 9v8l-3-2V9z" fill="#f5f5f5" stroke="#333" />
                <path d="M1 1h16l-2 2.500H3z" fill="#3b87ae" />
              </svg>
            </div>
            <div className="w-[283px] overflow-hidden shrink-0 -mt-[1px]">
              <div className="h-[24px] flex items-center whitespace-nowrap text-[#111] pl-[3px] gap-[5px] tracking-[0.25px]">
                <PartI />
                <span className="whitespace-pre">Part1  (Default&lt;&lt;Default&gt;_Display State 1&gt;)</span>
              </div>
              <Row arrow icon={<HistoryI />} label="History" />
              <Row icon={<SensorI />} label="Sensors" />
              <Row arrow icon={<AnnotI />} label="Annotations" />
              <Row icon={<MaterialI />} label="Alloy Steel" />
              <Row icon={<PlaneI />} label="Front Plane" />
              <Row icon={<PlaneI />} label="Top Plane" />
              <Row icon={<PlaneI />} label="Right Plane" />
              <Row icon={<OriginI />} label="Origin" />
              <Row arrow icon={<BossI />} label="Boss-Extrude1" />
              <Row arrow icon={<BossI />} label="Boss-Extrude2" />
              <Row arrow icon={<BossI />} label="Boss-Extrude3" />
              <Row arrow icon={<BossI />} label="Boss-Extrude4" />
              <Row arrow icon={<CutI />} label="Cut-Extrude1" />
              <Row arrow icon={<CutI />} label="Cut-Extrude2" />
              <div className="h-[3px] mt-[1px] bg-[#2353b5]" />
            </div>
            <div className="flex-1" />
            <div className="h-[19px] mb-[2px] flex items-center shrink-0">
              <div className="w-[20px] flex justify-center">
                <Chev d="M7 1L2 6l5 5" />
              </div>
              <div className="w-[216px] h-[19px] bg-[#cdcdcd]" />
              <div className="flex-1 flex justify-end pr-[6px]">
                <Chev d="M3 1l5 5-5 5" />
              </div>
            </div>
          </div>

          {/* Canvas */}
          <div className="flex-1 relative">
            <div className="absolute left-[-1px] top-[381px] w-[11px] h-[49px] bg-[#f7f7f7] border border-l-0 border-[#a8a8a8] flex items-center justify-end pr-[1px]">
              <div className="w-[5px] h-[5px] rounded-full bg-[#adadad]" />
            </div>
            <div className="absolute left-[474px] top-[227px]">
              <PartDrawing />
            </div>
            <div className="absolute left-[34px] top-[717px]">
              <Triad />
            </div>
            <div className="absolute right-0 top-[21px] w-[33px] border border-r-0 border-b-0 border-[#8c8c8c]">
              <Pane>
                <HomeI />
              </Pane>
              <Pane>
                <BooksI />
              </Pane>
              <Pane>
                <FolderI />
              </Pane>
              <Pane>
                <PaletteI />
              </Pane>
              <Pane active>
                <Ball s={22} />
              </Pane>
              <Pane>
                <ListI />
              </Pane>
              <Pane>
                <ChatI />
              </Pane>
            </div>
          </div>
        </div>
      </div>

      {/* Bottom tabs */}
      <div className="h-[21px] shrink-0 flex border-t border-b border-[#8f8f8f] text-[15.5px] tracking-normal">
        <div className="ml-[2px] w-[80px] h-full bg-[#a3a7b9] border-t border-[#333] flex shrink-0">
          {["M6 2v12M14 2l-6 6 6 6z", "M12 2L5 8l7 6z", "M6 2l7 6-7 6z", "M14 2v12M5 2l6 6-6 6z"].map((d, i) => (
            <div key={i} className="flex-1 border-r border-[#c8cad6] flex items-center justify-center">
              <svg width="18" height="16" viewBox="0 0 18 16" className="block">
                <path d={d} fill="#858999" stroke="#858999" />
              </svg>
            </div>
          ))}
        </div>
        <div className="w-[76px] flex items-center justify-center font-bold shrink-0 text-[16px]">Model</div>
        <div className="w-[89px] flex items-center justify-center bg-[#d1d1d1] border-l border-r border-[#8f8f8f] shrink-0">
          3D Views
        </div>
        <div className="w-[144px] flex items-center justify-center bg-[#d1d1d1] border-r border-[#8f8f8f] shrink-0">
          Motion Study 1
        </div>
      </div>

      {/* Status bar */}
      <div className="h-[21px] shrink-0 flex items-start pt-[2px] whitespace-nowrap text-[15px] tracking-[-0.45px]">
        <div className="pl-[1px] leading-[21px]">SOLIDWORKS Premium 2016 x64 Edition</div>
        <div className="ml-auto flex items-start">
          <div className="w-[8px] h-[19px] border-l border-r border-[#cfcfcf]" />
          <div className="w-[86px] h-[19px] pl-[4px] leading-[21px]">Editing Part</div>
          <div className="w-[16px] h-[19px] border-l border-r border-[#cfcfcf]" />
          <div className="w-[111px] pl-[40px] leading-[21px]">MMGS</div>
          <div className="mt-[8px]">
            <svg width="7" height="4" viewBox="0 0 7 4" className="block">
              <path d="M0 4h7L3.500 0z" fill="#444" />
            </svg>
          </div>
          <div className="w-[85px] flex justify-end pr-[2px] -mt-[1px]">
            <svg width="18" height="16" viewBox="0 0 18 16" className="block">
              <path d="M1 8l9-6 7 4v3l-8 6-8-4z" fill="#f3f3f3" stroke="#444" />
              <path d="M1 8l8 4 8-6M9 12v3" stroke="#444" fill="none" />
              <circle cx="10" cy="7" r="2" stroke="#444" fill="none" />
            </svg>
          </div>
        </div>
      </div>
    </div>
  );
}
